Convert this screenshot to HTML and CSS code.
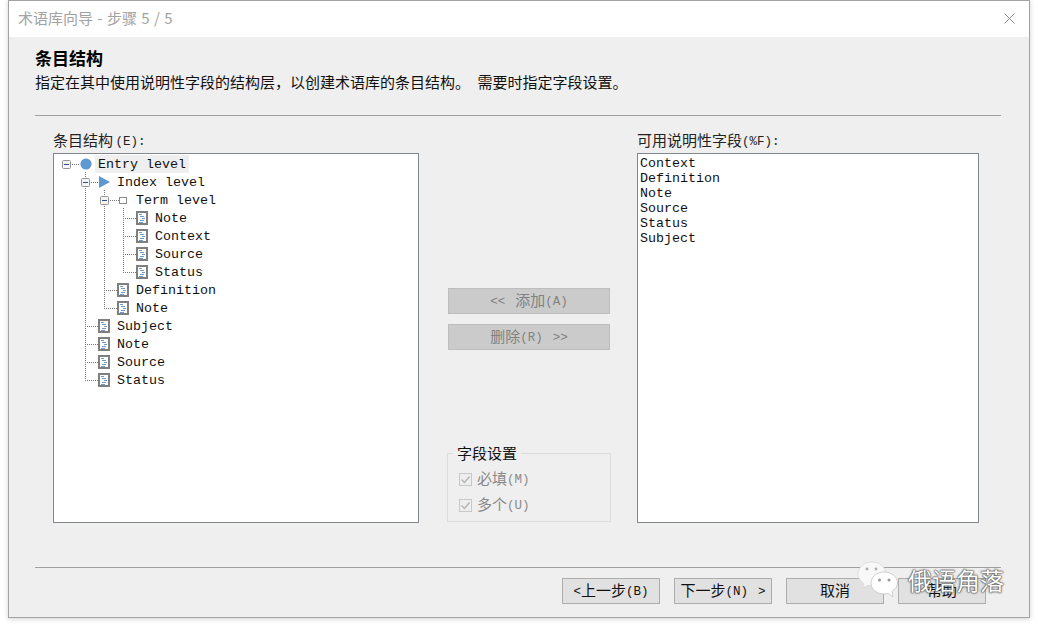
FILE: index.html
```html
<!DOCTYPE html>
<html lang="zh-CN">
<head>
<meta charset="utf-8">
<title>术语库向导</title>
<link rel="stylesheet" href="styles.css">
</head>
<body>
<svg class="defs" width="0" height="0" aria-hidden="true">
  <symbol id="doc" viewBox="0 0 12 14">
    <rect x="1" y="1" width="10" height="12" fill="#fff" stroke="#7f7f7f" stroke-width="2"/>
    <g stroke="#6d9ad0" stroke-width="1" shape-rendering="crispEdges">
      <path d="M3 3.5H6M4 5.500H8M6 7.500H9M4 9.500H8M3 11.500H7"/>
    </g>
  </symbol>
  <symbol id="exp" viewBox="0 0 9 9">
    <rect x="0.5" y="0.5" width="8" height="8" rx="1" fill="#f4f4f4" stroke="#949494"/>
    <path d="M2 4.5H7" stroke="#2f4f94" shape-rendering="crispEdges"/>
  </symbol>
</svg>
<main class="window">
  <header class="titlebar">
    <span class="titletext">术语库向导 - 步骤 5 / 5</span>
    <svg class="close" width="11" height="11" viewBox="0 0 11 11"><path d="M0.5 0.5L10.5 10.5M10.5 0.5L0.5 10.5" stroke="#8c8c8c" fill="none"/></svg>
  </header>
  <div class="content">
    <section class="intro">
      <h1 class="heading">条目结构</h1>
      <p class="desc">指定在其中使用说明性字段的结构层，以创建术语库的条目结构。<span class="en"> </span>需要时指定字段设置。</p>
    </section>
    <section class="columns">
      <div class="col col-left">
        <div class="label">条目结构<span class="en nudge">(E):</span></div>
        <div class="tree">
          <svg class="lines" width="364" height="368" viewBox="54 154 364 368">
            <path d="M85.5 172V381M104.5 190V309M123.5 208V273M72 164.5H80M91 182.5H99M110 200.5H119M123 218.5H136M123 236.5H136M123 254.5H136M123 272.5H136M104 290.5H117M104 308.5H117M85 326.5H98M85 344.5H98M85 362.5H98M85 380.5H98" stroke="#777" stroke-dasharray="1 1" fill="none" shape-rendering="crispEdges"/>
          </svg>
          <div class="row r0">
            <svg class="expander"><use href="#exp"/></svg>
            <svg class="node n-circle" viewBox="0 0 12 12"><circle cx="6" cy="6" r="5.6" fill="#5f97d1"/></svg>
            <span class="text selected">Entry level</span>
          </div>
          <div class="row r1">
            <svg class="expander"><use href="#exp"/></svg>
            <svg class="node n-tri" viewBox="0 0 11 12"><path d="M0 0L11 6L0 12Z" fill="#5f97d1"/></svg>
            <span class="text">Index level</span>
          </div>
          <div class="row r2">
            <svg class="expander"><use href="#exp"/></svg>
            <svg class="node n-rect" viewBox="0 0 8 7"><rect x="0.5" y="0.5" width="7" height="6" fill="#fff" stroke="#8a8a8a"/></svg>
            <span class="text">Term level</span>
          </div>
          <div class="row leaf l3"><svg class="doc"><use href="#doc"/></svg><span class="text">Note</span></div>
          <div class="row leaf l3"><svg class="doc"><use href="#doc"/></svg><span class="text">Context</span></div>
          <div class="row leaf l3"><svg class="doc"><use href="#doc"/></svg><span class="text">Source</span></div>
          <div class="row leaf l3"><svg class="doc"><use href="#doc"/></svg><span class="text">Status</span></div>
          <div class="row leaf l2"><svg class="doc"><use href="#doc"/></svg><span class="text">Definition</span></div>
          <div class="row leaf l2"><svg class="doc"><use href="#doc"/></svg><span class="text">Note</span></div>
          <div class="row leaf l1"><svg class="doc"><use href="#doc"/></svg><span class="text">Subject</span></div>
          <div class="row leaf l1"><svg class="doc"><use href="#doc"/></svg><span class="text">Note</span></div>
          <div class="row leaf l1"><svg class="doc"><use href="#doc"/></svg><span class="text">Source</span></div>
          <div class="row leaf l1"><svg class="doc"><use href="#doc"/></svg><span class="text">Status</span></div>
        </div>
      </div>
      <div class="col col-mid">
        <button class="btn-move" disabled><span class="en">&lt;&lt; </span><span class="nudge">添加</span><span class="en">(A)</span></button>
        <button class="btn-move" disabled>删除<span class="en">(R) </span><span class="en nudge">&gt;&gt;</span></button>
        <fieldset class="group">
          <legend class="legend">字段设置</legend>
          <div class="check">
            <span class="box"><svg width="11" height="11" viewBox="0 0 11 11"><path d="M1.5 5.5L4.5 8.5L9.5 2.5" stroke="#b4b4b4" stroke-width="1.4" fill="none"/></svg></span>
            <span>必填<span class="en">(M)</span></span>
          </div>
          <div class="check">
            <span class="box"><svg width="11" height="11" viewBox="0 0 11 11"><path d="M1.5 5.5L4.5 8.5L9.5 2.5" stroke="#b4b4b4" stroke-width="1.4" fill="none"/></svg></span>
            <span>多个<span class="en">(U)</span></span>
          </div>
        </fieldset>
      </div>
      <div class="col col-right">
        <div class="label">可用说明性字段<span class="en">(%F):</span></div>
        <ul class="list">
          <li>Context</li>
          <li>Definition</li>
          <li>Note</li>
          <li>Source</li>
          <li>Status</li>
          <li>Subject</li>
        </ul>
      </div>
    </section>
    <footer class="footer">
      <button class="btn w98"><span class="en">&lt;</span>上一步<span class="en">(B)</span></button>
      <button class="btn w98">下一步<span class="en">(N) </span><span class="en nudge">&gt;</span></button>
      <button class="btn w98">取消</button>
      <button class="btn w88">帮助</button>
    </footer>
  </div>
  <div class="watermark">
    <svg class="wechat" width="42" height="38" viewBox="0 0 42 38">
      <path d="M15 1C7 1 1 6.500 1 13C1 17 3.500 20.500 7 22.500L5.500 27L11 24.300C12.500 24.700 14 25 15.500 25C23 25 29 19.500 29 13C29 6.500 23 1 15 1Z" fill="#f8f8f8" stroke="#cfcfcf" stroke-width="0.6"/>
      <path d="M27 11C19.500 11 14 16 14 22C14 28 19.500 33 27 33C28.500 33 30 32.700 31.300 32.300L36 36L35 30.300C38.500 28 40.500 25.200 40.500 22C40.500 16 34.500 11 27 11Z" fill="#fff" stroke="#c4c4c4" stroke-width="0.8"/>
      <circle cx="10" cy="8" r="1.400" fill="#aaa"/><circle cx="19" cy="8" r="1.400" fill="#aaa"/>
      <circle cx="22.500" cy="19" r="1.500" fill="#999"/><circle cx="32" cy="19" r="1.500" fill="#999"/>
    </svg>
    <span class="wm-text">俄语角落</span>
  </div>
</main>
</body>
</html>
```
FILE: styles.css
```css
* { box-sizing: border-box; }
html, body { margin: 0; padding: 0; }
body {
  width: 1038px;
  height: 626px;
  background: #fff;
  overflow: hidden;
  font-family: "Noto Sans CJK SC", "Liberation Mono", monospace;
  font-size: 15px;
  color: #111;
}
.defs { position: absolute; }
.en { font-family: "Liberation Mono", "Noto Sans CJK SC", monospace; font-size: 12.5px; white-space: pre; vertical-align: 1px; }
.nudge { margin-left: 2.5px; }

.window {
  position: relative;
  width: 1022px;
  height: 618px;
  margin-left: 8px;
  background: #efefef;
  border: 1px solid #a3a3a3;
  box-shadow: 0 1px 5px rgba(0, 0, 0, 0.18);
  display: flex;
  flex-direction: column;
}
.titlebar {
  height: 36px;
  flex: none;
  background: #fff;
  display: flex;
  align-items: center;
  justify-content: space-between;
  padding: 0 14px 2px 9px;
}
.titletext { font-size: 15px; color: #a2a2a2; line-height: 34px; word-spacing: 1px; }
.close { display: block; }

.content { flex: 1; display: flex; flex-direction: column; padding: 0 28px 0 26px; }
.intro { height: 79px; border-bottom: 1px solid #a0a0a0; padding-top: 10px; flex: none; }
.heading { margin: 0 0 2px; font-size: 17px; font-weight: 700; line-height: 22px; color: #000; }
.desc { margin: 0; font-size: 15px; line-height: 22px; white-space: pre; color: #111; }

.columns { display: flex; padding: 16px 0 0 18px; height: 407px; flex: none; }
.col { display: flex; flex-direction: column; flex: none; }
.col-left { width: 366px; }
.col-mid { width: 164px; margin-left: 28px; padding-top: 21px; padding-bottom: 1px; }
.col-right { width: 342px; margin-left: 26px; }
.label { height: 21px; line-height: 16px; color: #222; }

.tree {
  position: relative;
  height: 370px;
  background: #fff;
  border: 1px solid #828790;
  padding-top: 1px;
  font-family: "Liberation Mono", monospace;
  font-size: 13.33px;
  color: #111;
}
.lines { position: absolute; left: 0; top: 0; pointer-events: none; }
.row { position: relative; height: 18px; display: flex; align-items: center; }
.expander { width: 9px; height: 9px; flex: none; }
.node { flex: none; }
.doc { width: 12px; height: 14px; flex: none; }
.text { height: 18px; line-height: 20px; white-space: pre; }
.selected { background: #efefef; padding: 0 3px; margin-left: -3px; }

.r0 { padding-left: 8px; }
.r0 .n-circle { width: 12px; height: 12px; margin: 0 6px 0 9px; }
.r1 { padding-left: 27px; }
.r1 .n-tri { width: 11px; height: 12px; margin: 0 7px 0 9px; }
.r2 { padding-left: 46px; }
.r2 .n-rect { width: 8px; height: 7px; margin: 0 9px 0 10px; }
.leaf .doc { margin-right: 7px; }
.l1 { padding-left: 44px; }
.l2 { padding-left: 63px; }
.l3 { padding-left: 82px; }

.btn-move {
  width: 162px;
  height: 26px;
  margin: 0 1px 10px;
  flex: none;
  background: #cbcbcb;
  border: 1px solid #bdbdbd;
  color: #828282;
  font: inherit;
  padding: 0 0 4px;
  white-space: pre;
}
.btn-move:first-child { margin-top: 135px; }

.group {
  margin: auto 0 0;
  padding: 5px 0 0 11px;
  height: 77px;
  min-width: 0;
  border: 1px solid #dcdcdc;
}
.legend { margin-left: -6px; padding: 0 4px; line-height: 16px; font-size: 15px; color: #111; }
.check { height: 26px; display: flex; align-items: center; gap: 5px; color: #8a8a8a; line-height: 18px; }
.box {
  width: 13px;
  height: 13px;
  border: 1px solid #c8c8c8;
  background: #eee;
  display: flex;
  align-items: center;
  justify-content: center;
}

.list {
  list-style: none;
  margin: 0;
  padding: 2px 2px;
  height: 370px;
  background: #fff;
  border: 1px solid #828790;
  font-family: "Liberation Mono", monospace;
  font-size: 13.33px;
  line-height: 15px;
  color: #111;
}

.footer {
  height: 50px;
  flex: none;
  margin-top: 44px;
  border-top: 1px solid #a0a0a0;
  padding: 10px 15px 0 0;
  display: flex;
  justify-content: flex-end;
  align-items: flex-start;
  gap: 14px;
}
.btn {
  height: 26px;
  background: #e1e1e1;
  border: 1px solid #adadad;
  font: inherit;
  color: #111;
  padding: 0 0 4px;
  white-space: pre;
}
.w98 { width: 98px; }
.w88 { width: 88px; }

.watermark {
  position: absolute;
  left: 848px;
  top: 560px;
  display: flex;
  align-items: center;
  gap: 9px;
  pointer-events: none;
}
.wechat { display: block; }
.wm-text {
  font-size: 24px;
  line-height: 30px;
  color: #fff;
  text-shadow: 0 0 1px #333, 0 0 2px #555, 0 0 2px #555;
}
```
